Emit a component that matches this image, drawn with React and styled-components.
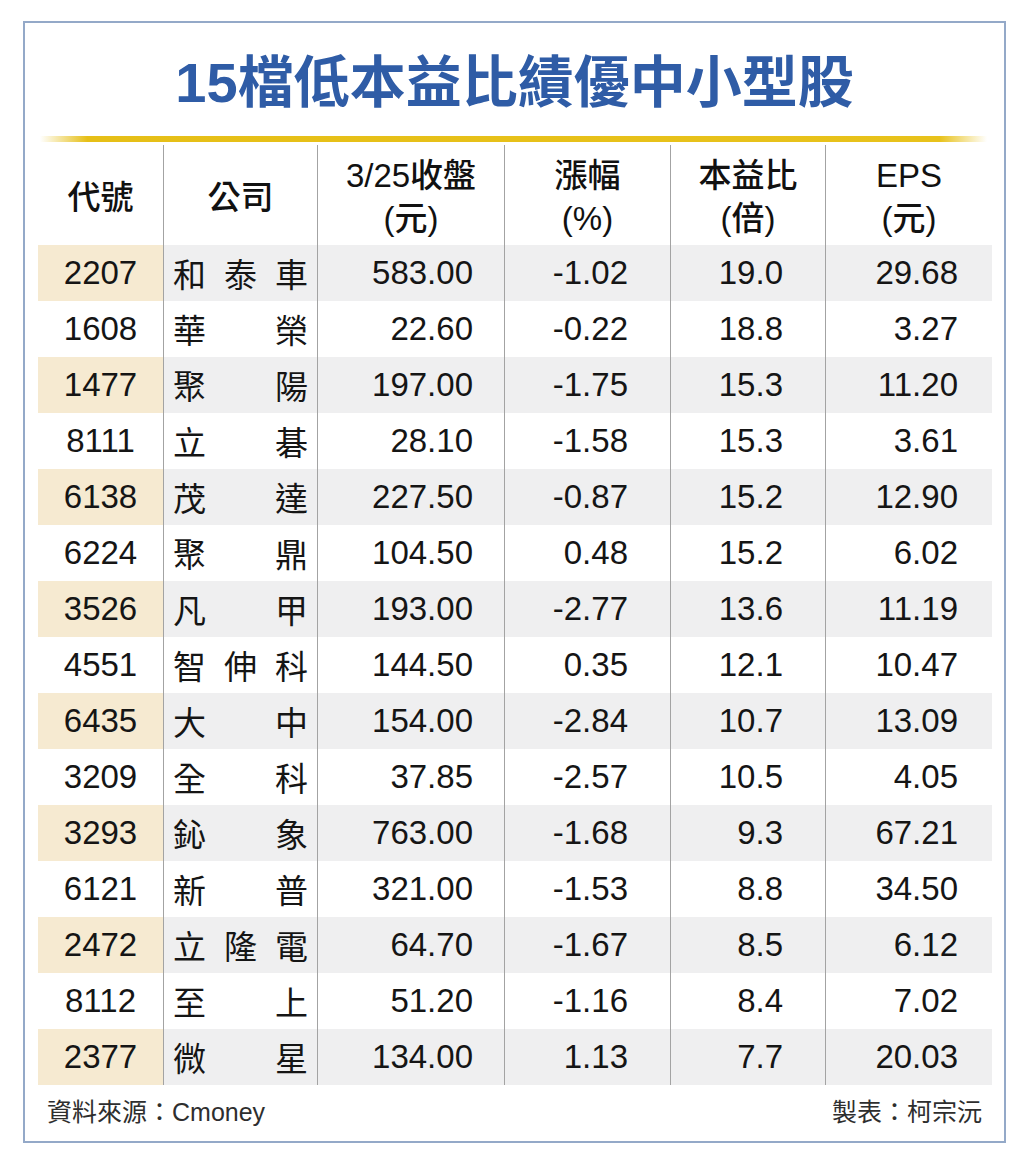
import React from 'react';
import styled, { createGlobalStyle } from 'styled-components';

const GlobalStyle = createGlobalStyle`
  html, body {
    margin: 0;
    padding: 0;
    background: #ffffff;
  }
  body {
    font-family: "Liberation Sans", "Noto Sans CJK TC", sans-serif;
    color: #151515;
  }
`;

const COLS = '125px 154px 187px 166px 155px 167px';

const rows = [
  ['2207', '和泰車', '583.00', '-1.02', '19.0', '29.68'],
  ['1608', '華榮', '22.60', '-0.22', '18.8', '3.27'],
  ['1477', '聚陽', '197.00', '-1.75', '15.3', '11.20'],
  ['8111', '立碁', '28.10', '-1.58', '15.3', '3.61'],
  ['6138', '茂達', '227.50', '-0.87', '15.2', '12.90'],
  ['6224', '聚鼎', '104.50', '0.48', '15.2', '6.02'],
  ['3526', '凡甲', '193.00', '-2.77', '13.6', '11.19'],
  ['4551', '智伸科', '144.50', '0.35', '12.1', '10.47'],
  ['6435', '大中', '154.00', '-2.84', '10.7', '13.09'],
  ['3209', '全科', '37.85', '-2.57', '10.5', '4.05'],
  ['3293', '鈊象', '763.00', '-1.68', '9.3', '67.21'],
  ['6121', '新普', '321.00', '-1.53', '8.8', '34.50'],
  ['2472', '立隆電', '64.70', '-1.67', '8.5', '6.12'],
  ['8112', '至上', '51.20', '-1.16', '8.4', '7.02'],
  ['2377', '微星', '134.00', '1.13', '7.7', '20.03'],
];

// right padding of the number columns
const padRight = [0, 0, 31, 42, 42, 34];

const Frame = styled.div`
  box-sizing: border-box;
  width: 983px;
  height: 1122px;
  margin: 21px 0 0 23px;
  border: 2px solid #94a9c8;
  background: #fff;
  display: flex;
  flex-direction: column;
`;

const Title = styled.h1`
  margin: 30px 0 0;
  height: 60px;
  line-height: 60px;
  text-align: center;
  font-family: "Liberation Sans", "Noto Sans CJK TC", sans-serif;
  font-size: 56px;
  font-weight: 600;
  color: #2f5ca6;
`;

const GoldLine = styled.div`
  height: 6px;
  margin: 23px 17px 0 15px;
  background: linear-gradient(
    to right,
    rgba(232, 192, 24, 0) 0%,
    #e6bf17 5%,
    #e8c21b 95%,
    rgba(232, 192, 24, 0) 100%
  );
`;

const Table = styled.div`
  margin: 3px 0 0 13px;
  display: flex;
  flex-direction: column;
`;

const Row = styled.div`
  display: grid;
  grid-template-columns: ${COLS};
  height: ${(p) => p.$h}px;
`;

const Cell = styled.div`
  box-sizing: border-box;
  display: flex;
  align-items: center;
  justify-content: ${(p) => (p.$right ? 'flex-end' : 'center')};
  padding-right: ${(p) => p.$pr || 0}px;
  border-left: ${(p) => (p.$first ? 'none' : '1.5px solid #a3a3a3')};
  background: ${(p) => p.$bg || 'transparent'};
  font-size: 33px;
  color: #151515;
`;

const HeadCell = styled(Cell)`
  flex-direction: column;
  justify-content: center;
  padding-top: 4px;
  font-family: "Liberation Sans", "Noto Sans CJK TC", sans-serif;
  font-size: 33px;
  font-weight: 500;
  line-height: 43px;
  color: #111;
`;

const Name = styled(Cell)`
  justify-content: space-between;
  padding: 0 9px 0 9px;
  font-size: 33px;
`;

const Footer = styled.div`
  display: flex;
  justify-content: space-between;
  align-items: center;
  height: 50px;
  padding: 0 22px 0 22px;
  font-size: 25px;
  color: #2e2e2e;
`;

function HeaderRow() {
  const heads = [
    ['代號'],
    ['公司'],
    ['3/25收盤', '(元)'],
    ['漲幅', '(%)'],
    ['本益比', '(倍)'],
    ['EPS', '(元)'],
  ];
  return (
    <Row $h={100}>
      {heads.map((lines, i) => (
        <HeadCell key={i} $first={i === 0}>
          {lines.map((l) => (
            <span key={l}>{l}</span>
          ))}
        </HeadCell>
      ))}
    </Row>
  );
}

function DataRow({ data, shaded }) {
  const [code, name, ...nums] = data;
  return (
    <Row $h={56}>
      <Cell $first $bg={shaded ? '#f6ead1' : null}>{code}</Cell>
      <Name $bg={shaded ? '#efeff0' : null}>
        {name.split('').map((c, i) => (
          <span key={i}>{c}</span>
        ))}
      </Name>
      {nums.map((n, i) => (
        <Cell key={i} $right $pr={padRight[i + 2]} $bg={shaded ? '#efeff0' : null}>
          {n}
        </Cell>
      ))}
    </Row>
  );
}

export default function App() {
  return (
    <>
      <GlobalStyle />
      <Frame>
        <Title>15檔低本益比績優中小型股</Title>
        <GoldLine />
        <Table>
          <HeaderRow />
          {rows.map((r, i) => (
            <DataRow key={r[0]} data={r} shaded={i % 2 === 0} />
          ))}
        </Table>
        <Footer>
          <span>資料來源：Cmoney</span>
          <span>製表：柯宗沅</span>
        </Footer>
      </Frame>
    </>
  );
}
